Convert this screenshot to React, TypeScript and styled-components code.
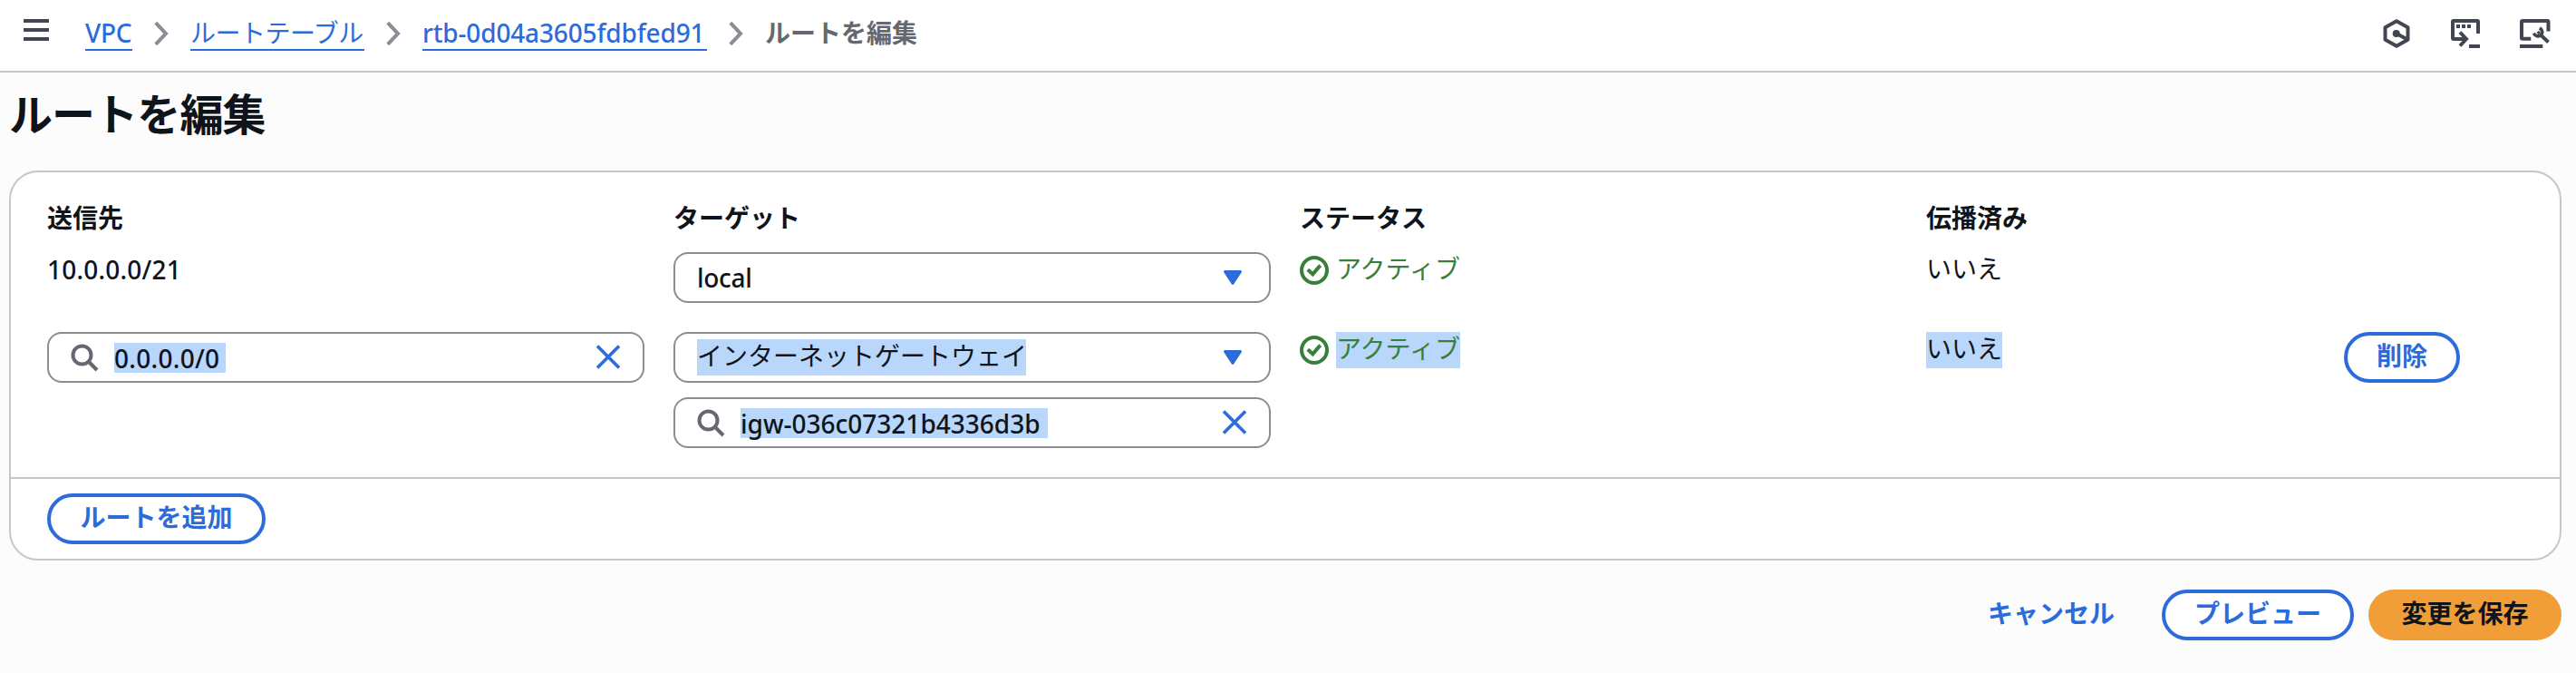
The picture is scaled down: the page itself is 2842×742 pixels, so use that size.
import React from "react";
import styled, { createGlobalStyle } from "styled-components";

const color = {
  link: "#2b6bda",
  text: "#0f141a",
  muted: "#656871",
  icon: "#424650",
  divider: "#c6c6cd",
  control: "#8c8c94",
  success: "#38803a",
  primary: "#f19e38",
  selection: "#b9d6fb",
  page: "#fcfcfd",
};

const GlobalStyle = createGlobalStyle`
  * { box-sizing: border-box; }
  body {
    margin: 0;
    background: ${color.page};
    color: ${color.text};
    font-family: "Noto Sans", "Noto Sans CJK JP", sans-serif;
    font-size: 28px;
    line-height: 40px;
  }
  svg { display: block; flex: none; }
`;

const Page = styled.div`
  width: 100%;
  min-height: 742px;
  overflow: hidden;
`;

const TopBar = styled.header`
  display: flex;
  align-items: flex-start;
  height: 80px;
  padding: 0 28px 0 26px;
  background: #fff;
  border-bottom: 2px solid ${color.divider};
`;

const MenuButton = styled.button`
  display: flex;
  flex-direction: column;
  gap: 6px;
  width: 28px;
  margin: 21px 40px 0 0;
  padding: 0;
  border: 0;
  background: none;
`;

const MenuBar = styled.span`
  width: 28px;
  height: 4px;
  background: ${color.icon};
`;

const Crumbs = styled.nav`
  display: flex;
  align-items: flex-start;
  padding-top: 16px;
  white-space: nowrap;
`;

const Crumb = styled.a<{ $spacing: number; $width: number; $medium?: boolean }>`
  width: ${(p) => p.$width}px;
  height: 40px;
  color: ${color.link};
  font-weight: ${(p) => (p.$medium ? 500 : 400)};
  letter-spacing: ${(p) => p.$spacing}px;
  border-bottom: 2px solid ${color.link};
`;

const CurrentCrumb = styled.span`
  color: ${color.muted};
  font-weight: 700;
`;

const CrumbArrow = styled.svg`
  margin: 7px 24px 0 24px;
`;

const Tools = styled.div`
  display: flex;
  margin: 21px 0 0 auto;
`;

const Tool = styled.div<{ $gap: number }>`
  margin-right: ${(p) => p.$gap}px;
`;

const Title = styled.h1`
  margin: 0;
  padding: 16px 0 0 10px;
  height: 108px;
  font-size: 48px;
  line-height: 59px;
  font-weight: 700;
  letter-spacing: -0.9px;
`;

const Card = styled.section`
  margin: 0 16px 0 10px;
  background: #fff;
  border: 2px solid ${color.divider};
  border-radius: 32px;
`;

const Routes = styled.div`
  display: grid;
  grid-template-columns: 659px 659px 659px 429px 1fr;
  column-gap: 32px;
  padding: 32px 40px;
`;

const ColumnTitle = styled.div`
  height: 56px;
  line-height: 37px;
  font-weight: 700;
`;

const Cell = styled.div<{ $last?: boolean }>`
  display: flex;
  flex-direction: column;
  align-items: flex-start;
  gap: 16px;
  margin-bottom: ${(p) => (p.$last ? 0 : 32)}px;
`;

const Value = styled.span<{ $latin?: boolean }>`
  height: 40px;
  line-height: ${(p) => (p.$latin ? 39 : 37)}px;
  font-weight: ${(p) => (p.$latin ? 500 : 400)};
  letter-spacing: ${(p) => (p.$latin ? 0.2 : 0)}px;
`;

const Control = styled.div`
  display: flex;
  align-items: center;
  width: 100%;
  height: 56px;
  padding: 0 24px;
  border: 2px solid ${color.control};
  border-radius: 16px;
  background: #fff;
`;

const ControlText = styled.span`
  padding-bottom: 1px;
  font-weight: 500;
  letter-spacing: -0.3px;
`;

const SelectedValue = styled(Value)<{ $width: number }>`
  width: ${(p) => p.$width}px;
  background: ${color.selection};
  white-space: nowrap;
`;

const SelectedInput = styled.span<{ $spacing: number; $width: number }>`
  width: ${(p) => p.$width}px;
  height: 33px;
  line-height: 34px;
  background: ${color.selection};
  font-weight: 500;
  letter-spacing: ${(p) => p.$spacing}px;
  white-space: nowrap;
`;

const ControlEnd = styled.div<{ $inset: number }>`
  margin-left: auto;
  margin-right: ${(p) => p.$inset}px;
`;

const SearchIcon = styled.svg`
  margin-right: 17px;
`;

const Status = styled.div`
  display: flex;
  align-items: center;
  gap: 8px;
  height: 40px;
  color: ${color.success};
`;

const Footer = styled.div`
  padding: 16px 40px;
  border-top: 2px solid ${color.divider};
`;

const Button = styled.button<{ $kind: "normal" | "primary" | "link"; $width: number }>`
  display: flex;
  align-items: center;
  justify-content: center;
  width: ${(p) => p.$width}px;
  height: 56px;
  padding: 0 0 4px;
  border: ${(p) => (p.$kind === "normal" ? `4px solid ${color.link}` : "0")};
  border-radius: 28px;
  background: ${(p) => ({ normal: "#fff", primary: color.primary, link: "transparent" })[p.$kind]};
  color: ${(p) => (p.$kind === "primary" ? color.text : color.link)};
  font: inherit;
  font-weight: 700;
  white-space: nowrap;
`;

const Actions = styled.div`
  display: flex;
  justify-content: flex-end;
  gap: 16px;
  padding: 32px 16px 0 0;
`;

const Arrow = () => (
  <CrumbArrow width="16" height="28" viewBox="0 0 16 28" fill="none" stroke={color.control} strokeWidth="4">
    <path d="M1.8 2.2 13 14 1.8 25.8" />
  </CrumbArrow>
);

const Search = () => (
  <SearchIcon width="31" height="31" viewBox="0 0 31 31" fill="none" stroke={color.muted} strokeWidth="4">
    <circle cx="12.5" cy="12.5" r="10" />
    <path d="M19.5 19.5 29 29" />
  </SearchIcon>
);

const Clear = () => (
  <ControlEnd $inset={0}>
    <svg width="28" height="28" viewBox="0 0 28 28" fill="none" stroke={color.link} strokeWidth="3.6">
      <path d="M2 1.500 26 25.500M26 1.500 2 25.500" />
    </svg>
  </ControlEnd>
);

const Caret = () => (
  <ControlEnd $inset={6}>
    <svg width="20" height="16" viewBox="0 0 20 16" fill={color.link}>
      <path d="M1.6 0h16.8c1.4 0 2 1.3 1.2 2.5L11.2 15.2c-.6.9-1.8.9-2.4 0L.4 2.5C-.4 1.3.2 0 1.6 0z" />
    </svg>
  </ControlEnd>
);

const Check = () => (
  <svg width="32" height="32" viewBox="0 0 32 32" fill="none" stroke={color.success} strokeWidth="4">
    <circle cx="16" cy="16" r="14" />
    <path d="M8.8 15.3 14.3 20.3 22.6 10.6" />
  </svg>
);

const HexagonIcon = () => (
  <svg width="30" height="32" viewBox="0 0 30 32" fill="none" stroke={color.icon} strokeWidth="4" strokeLinejoin="round">
    <path d="M15 2.2 27.5 9.2V22.8L15 29.8 2.5 22.8V9.2z" />
    <path d="M15 16 27 22.5" />
    <circle cx="14.7" cy="16" r="4" fill={color.icon} stroke="none" />
  </svg>
);

const ShellIcon = () => (
  <svg width="32" height="32" viewBox="0 0 32 32" fill="none" stroke={color.icon} strokeWidth="4">
    <path d="M30 16V3Q30 2 29 2H3Q2 2 2 3V21Q2 22 3 22H17" />
    <path d="M10 14.5 17 22 10 29.5" />
    <path d="M6 8H10M12 8H16M18 8H22M20 30H32" />
  </svg>
);

const SettingsIcon = () => (
  <svg width="34" height="32" viewBox="0 0 34 32" fill="none" stroke={color.icon} strokeWidth="4">
    <path d="M31.5 13.5V3Q31.5 2 30.5 2H3Q2 2 2 3V21Q2 21.7 3 21.7H12.3" />
    <path d="M0 30H25.3" />
    <path d="M22 9.8C25.5 12.5 25.5 16 22.8 17.8C20.5 19.8 17.5 19 15.2 15.8" strokeWidth="3.6" />
    <path d="M22.5 17 31.5 25.5" strokeWidth="3.8" />
    <path d="M19.5 16 22 14" strokeWidth="3" />
  </svg>
);

export default function App() {
  return (
    <Page>
      <GlobalStyle />
      <TopBar>
        <MenuButton aria-label="menu">
          <MenuBar />
          <MenuBar />
          <MenuBar />
        </MenuButton>
        <Crumbs>
          <Crumb $medium $width={52} $spacing={-0.3}>VPC</Crumb>
          <Arrow />
          <Crumb $width={192} $spacing={-0.5}>ルートテーブル</Crumb>
          <Arrow />
          <Crumb $medium $width={314} $spacing={-0.15}>rtb-0d04a3605fdbfed91</Crumb>
          <Arrow />
          <CurrentCrumb>ルートを編集</CurrentCrumb>
        </Crumbs>
        <Tools>
          <Tool $gap={45}><HexagonIcon /></Tool>
          <Tool $gap={44}><ShellIcon /></Tool>
          <Tool $gap={0}><SettingsIcon /></Tool>
        </Tools>
      </TopBar>

      <Title>ルートを編集</Title>

      <Card>
        <Routes>
          <ColumnTitle>送信先</ColumnTitle>
          <ColumnTitle>ターゲット</ColumnTitle>
          <ColumnTitle>ステータス</ColumnTitle>
          <ColumnTitle>伝播済み</ColumnTitle>
          <ColumnTitle />

          <Cell><Value $latin>10.0.0.0/21</Value></Cell>
          <Cell>
            <Control>
              <ControlText>local</ControlText>
              <Caret />
            </Control>
          </Cell>
          <Cell>
            <Status><Check /><Value>アクティブ</Value></Status>
          </Cell>
          <Cell><Value>いいえ</Value></Cell>
          <Cell />

          <Cell $last>
            <Control>
              <Search />
              <SelectedInput $width={123} $spacing={0.3}>0.0.0.0/0</SelectedInput>
              <Clear />
            </Control>
          </Cell>
          <Cell $last>
            <Control>
              <SelectedValue $width={363}>インターネットゲートウェイ</SelectedValue>
              <Caret />
            </Control>
            <Control>
              <Search />
              <SelectedInput $width={339} $spacing={0}>igw-036c07321b4336d3b</SelectedInput>
              <Clear />
            </Control>
          </Cell>
          <Cell $last>
            <Status><Check /><SelectedValue $width={137}>アクティブ</SelectedValue></Status>
          </Cell>
          <Cell $last><SelectedValue $width={84}>いいえ</SelectedValue></Cell>
          <Cell $last><Button $kind="normal" $width={128}>削除</Button></Cell>
        </Routes>
        <Footer>
          <Button $kind="normal" $width={241}>ルートを追加</Button>
        </Footer>
      </Card>

      <Actions>
        <Button $kind="link" $width={212}>キャンセル</Button>
        <Button $kind="normal" $width={212}>プレビュー</Button>
        <Button $kind="primary" $width={213}>変更を保存</Button>
      </Actions>
    </Page>
  );
}
